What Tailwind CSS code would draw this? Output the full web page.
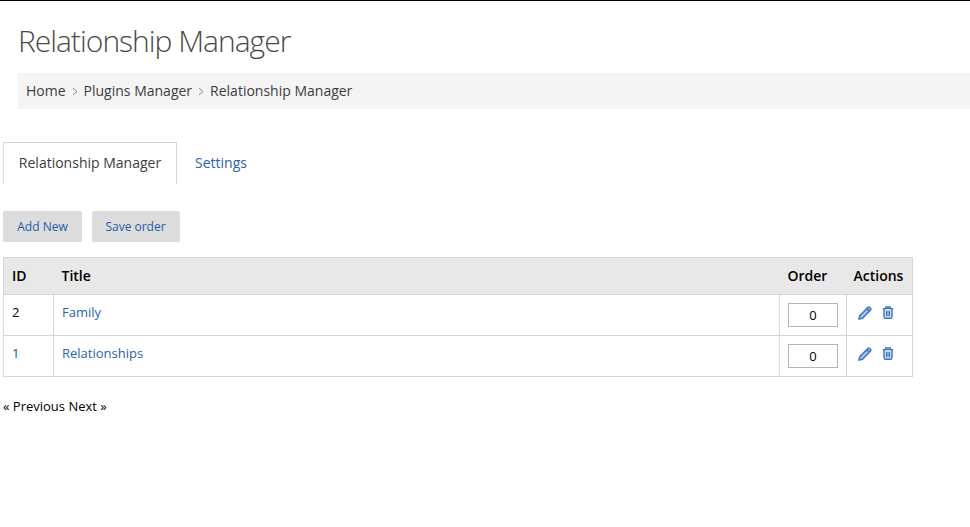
<!DOCTYPE html>
<html lang="en">
<head>
    <meta charset="UTF-8" />
    <title>Relationship Manager</title>
    <script src="https://cdn.jsdelivr.net/npm/@tailwindcss/browser@4"></script>
</head>
<body class="bg-white font-['Open_Sans',sans-serif] text-[13px] text-black">
    <div class="border-t border-black h-[527px] overflow-hidden">
        <!-- Page header -->
        <div class="pl-[18px] pt-5">
            <h1 class="font-light text-[30px] leading-[40px] tracking-[-1px] text-[#4a4a4a]">Relationship Manager</h1>
            <div class="mt-3 h-9 bg-[#f4f4f4] pl-2 flex items-center gap-[5px] text-sm text-[#3d3d3d]">
                <span>Home</span>
                <svg class="w-2 h-[9px]" viewBox="0 0 8 9" fill="none" stroke="#888" stroke-width="1"><path d="M2 1 L6 4.5 L2 8" /></svg>
                <span>Plugins Manager</span>
                <svg class="w-2 h-[9px]" viewBox="0 0 8 9" fill="none" stroke="#888" stroke-width="1"><path d="M2 1 L6 4.5 L2 8" /></svg>
                <span>Relationship Manager</span>
            </div>
        </div>

        <div class="pl-[3px]">
            <!-- Tabs -->
            <div class="mt-[33px] flex text-sm">
                <div class="h-[42px] w-[174px] pb-[2px] border border-b-0 border-[#d5d5d5] flex items-center justify-center text-[#3d3d3d]">Relationship Manager</div>
                <div class="h-[42px] pl-[18px] flex items-center text-[#2b62ad]">Settings</div>
            </div>

            <!-- Buttons -->
            <div class="mt-[27px] flex gap-[10px] text-xs text-[#1f5ba8]">
                <button class="h-[31px] w-[79px] bg-[#dcdcdc] rounded-[2px]">Add New</button>
                <button class="h-[31px] w-[88px] pr-[1px] bg-[#dcdcdc] rounded-[2px]">Save order</button>
            </div>

            <!-- Table -->
            <table class="mt-[15px] w-[910px] border-collapse table-fixed">
                <thead>
                    <tr class="h-[37px] bg-[#e8e8e8] text-sm font-semibold">
                        <th class="w-[50px] border-y border-l border-[#d5d5d5] pl-2 text-left font-semibold">ID</th>
                        <th class="border-y border-[#d5d5d5] pl-2 text-left font-semibold">Title</th>
                        <th class="w-[67px] border-y border-[#d5d5d5] pl-2 text-left font-semibold">Order</th>
                        <th class="w-[66px] border-y border-r border-[#d5d5d5] pl-[7px] text-left font-semibold">Actions</th>
                    </tr>
                </thead>
                <tbody>
                    <tr class="h-[41px]">
                        <td class="border border-[#d5d5d5] pl-2 pb-[5px]">2</td>
                        <td class="border border-[#d5d5d5] pl-2 pb-[5px] text-[#2b62ad]">Family</td>
                        <td class="border border-[#d5d5d5] pl-2">
                            <input class="block w-[50px] h-6 border border-[#b5b5b5] text-center text-[13px] text-black" value="0" />
                        </td>
                        <td class="border border-[#d5d5d5] pl-[11px] pb-[5px]">
                            <div class="flex items-center gap-[10px]">
                                <svg class="w-[14px] h-[14px]" viewBox="0 0 14 14" fill="#a9c5e8" stroke="#3f78c2" stroke-width="1.5"><path d="M1 13 L1.8 9.6 L10 1.4 Q10.8 .8 11.5 1.4 L12.6 2.5 Q13.2 3.2 12.6 4 L4.4 12.2 Z" /><path d="M8.8 2.6 L11.4 5.2" /></svg>
                                <svg class="w-3 h-[13px]" viewBox="0 0 12 13" fill="none" stroke="#3f78c2" stroke-width="1.4"><path d="M.8 2.7 H11.2 M3.8 2.4 V1 H8.2 V2.4" /><path fill="#c5d8ef" d="M2 3 V10.4 Q2 12.2 3.6 12.2 H8.4 Q10 12.2 10 10.4 V3" /><path stroke-width="1" d="M4.5 5 V10 M6 5 V10 M7.5 5 V10" /></svg>
                            </div>
                        </td>
                    </tr>
                    <tr class="h-[41px]">
                        <td class="border border-[#d5d5d5] pl-2 pb-[5px] text-[#1a4f96]">1</td>
                        <td class="border border-[#d5d5d5] pl-2 pb-[5px] text-[#2b62ad]">Relationships</td>
                        <td class="border border-[#d5d5d5] pl-2">
                            <input class="block w-[50px] h-6 border border-[#b5b5b5] text-center text-[13px] text-black" value="0" />
                        </td>
                        <td class="border border-[#d5d5d5] pl-[11px] pb-[5px]">
                            <div class="flex items-center gap-[10px]">
                                <svg class="w-[14px] h-[14px]" viewBox="0 0 14 14" fill="#a9c5e8" stroke="#3f78c2" stroke-width="1.5"><path d="M1 13 L1.8 9.6 L10 1.4 Q10.8 .8 11.5 1.4 L12.6 2.5 Q13.2 3.2 12.6 4 L4.4 12.2 Z" /><path d="M8.8 2.6 L11.4 5.2" /></svg>
                                <svg class="w-3 h-[13px]" viewBox="0 0 12 13" fill="none" stroke="#3f78c2" stroke-width="1.4"><path d="M.8 2.7 H11.2 M3.8 2.4 V1 H8.2 V2.4" /><path fill="#c5d8ef" d="M2 3 V10.4 Q2 12.2 3.6 12.2 H8.4 Q10 12.2 10 10.4 V3" /><path stroke-width="1" d="M4.5 5 V10 M6 5 V10 M7.5 5 V10" /></svg>
                            </div>
                        </td>
                    </tr>
                </tbody>
            </table>

            <div class="mt-[20px] text-[13px] leading-[18px]">« Previous Next »</div>
        </div>
    </div>
</body>
</html>
